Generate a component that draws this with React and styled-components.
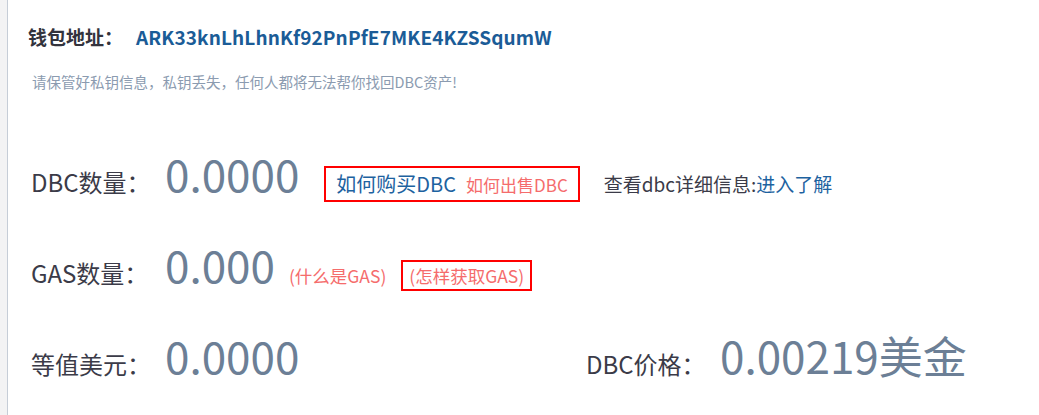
import React from "react";
import styled, { createGlobalStyle } from "styled-components";

const GlobalStyle = createGlobalStyle`
	html, body {
		margin: 0;
		padding: 0;
		background: #f3f3f4;
	}
	body {
		font-family: "Noto Sans CJK SC", "Liberation Sans", sans-serif;
	}
`;

function App() {
	return (
		<>
			<GlobalStyle />
			<Panel>
				<AddressLine>
					<span>钱包地址：</span>
					<Address>ARK33knLhLhnKf92PnPfE7MKE4KZSSqumW</Address>
				</AddressLine>
				<Tip>请保管好私钥信息，私钥丢失，任何人都将无法帮你找回DBC资产!</Tip>

				<Row $top={56}>
					<Label>DBC数量：</Label>
					<Value>0.0000</Value>
					<Box $height={36}>
						<LinkText $size={20}>如何购买DBC</LinkText>
						<Warn $size={17} $gap={10}>如何出售DBC</Warn>
					</Box>
					<Info>
						查看dbc详细信息:<LinkText $size={19}>进入了解</LinkText>
					</Info>
				</Row>

				<Row>
					<Label>GAS数量：</Label>
					<Value>0.000</Value>
					<Warn $size={17.5} $gap={14}>(什么是GAS)</Warn>
					<Box $height={31} $gap={15} $pad={6}>
						<Warn $size={17.5}>(怎样获取GAS)</Warn>
					</Box>
				</Row>

				<Row $height={91}>
					<Group $width={555}>
						<Label>等值美元：</Label>
						<Value>0.0000</Value>
					</Group>
					<Group>
						<Label>DBC价格：</Label>
						<Value>0.00219美金</Value>
					</Group>
				</Row>
			</Panel>
		</>
	);
}

export default App;

const Panel = styled.div`
	min-height: 100vh;
	box-sizing: border-box;
	margin-left: 7px;
	border-left: 1px solid #c6cdd7;
	background: #fff;
	padding: 22px 20px 0 20px;
`;

const AddressLine = styled.div`
	display: flex;
	align-items: baseline;
	font-size: 19px;
	line-height: 30px;
	font-weight: bold;
	color: #33333d;

	span {
		margin-right: 13px;
	}
`;

const Address = styled.span`
	color: #1b5c97;
	letter-spacing: 0.1px;
`;

const Tip = styled.p`
	margin: 20px 0 0 4px;
	font-size: 14.5px;
	line-height: 20px;
	color: #8b9bb0;
`;

const Row = styled.div`
	display: flex;
	align-items: baseline;
	height: ${(p) => p.$height || 91}px;
	margin-top: ${(p) => p.$top || 0}px;
	padding-left: 3px;
`;

const Group = styled.div`
	display: flex;
	align-items: baseline;
	width: ${(p) => (p.$width ? `${p.$width}px` : "auto")};
`;

const Label = styled.span`
	display: inline-block;
	width: 134px;
	font-size: 24px;
	color: #3b3b48;
`;

const Value = styled.span`
	font-size: 44px;
	line-height: 50px;
	color: #6c7f96;
`;

const Box = styled.span`
	display: inline-flex;
	align-items: baseline;
	box-sizing: border-box;
	height: ${(p) => p.$height}px;
	margin-left: ${(p) => p.$gap || 25}px;
	padding: 0 ${(p) => p.$pad || 10}px;
	border: 2px solid #ff0000;
	line-height: ${(p) => p.$height - 4}px;
`;

const LinkText = styled.span`
	font-size: ${(p) => p.$size}px;
	color: #1d62a0;
`;

const Warn = styled.span`
	font-size: ${(p) => p.$size}px;
	margin-left: ${(p) => p.$gap || 0}px;
	color: #f56c6c;
`;

const Info = styled.span`
	margin-left: 24px;
	font-size: 19px;
	color: #3b3b48;
`;
